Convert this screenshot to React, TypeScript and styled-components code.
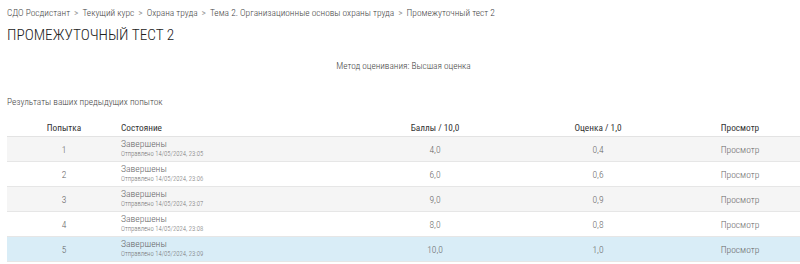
import React from "react";
import styled, { createGlobalStyle } from "styled-components";

const Global = createGlobalStyle`
  html, body { margin: 0; padding: 0; background: #fff; }
  body { font-family: "Roboto Condensed", Roboto, "Liberation Sans", sans-serif; font-stretch: condensed; font-weight: 300; color: #555; }
`;

const Page = styled.div`
  padding: 6px 0 0 7px;
  width: 807px;
  box-sizing: border-box;
  overflow: hidden;
  height: 264px;
`;

const Crumbs = styled.nav`
  display: flex;
  align-items: center;
  gap: 4px;
  font-size: 9.4px;
  line-height: 14px;
  color: #444;
  white-space: nowrap;
`;

const Sep = styled.span`
  color: #999;
  font-size: 9.4px;
  font-weight: 400;
`;

const Title = styled.h1`
  margin: 5px 0 0;
  font-size: 15.3px;
  line-height: 20px;
  font-weight: 300;
  color: #222;
`;

const Method = styled.div`
  margin-top: 14px;
  text-align: center;
  font-size: 9.3px;
  line-height: 14px;
  color: #444;
  padding-right: 7px;
`;

const Subtitle = styled.div`
  margin-top: 22px;
  font-size: 9.4px;
  line-height: 14px;
  color: #444;
`;

const Table = styled.table`
  margin-top: 10px;
  width: 800px;
  border-collapse: collapse;
  table-layout: fixed;
  font-size: 9.5px;
`;

const Th = styled.th<{ $align?: string; $w: number }>`
  width: ${(p) => p.$w}px;
  text-align: ${(p) => p.$align || "center"};
  font-weight: 400;
  font-size: 9.3px;
  color: #333;
  height: 17px;
  padding: 0;
  border-bottom: 1px solid #e3e3e3;
`;

const Tr = styled.tr<{ $bg: string }>`
  background: ${(p) => p.$bg};
  height: 24px;
  border-bottom: 1px solid #e6e6e6;
`;

const Td = styled.td<{ $align?: string }>`
  text-align: ${(p) => p.$align || "center"};
  padding: 0;
  height: 24px;
  color: #666;
  vertical-align: middle;
`;

const StateCell = styled.div`
  display: flex;
  flex-direction: column;
  padding-bottom: 2px;
`;

const State = styled.div`
  font-size: 9.7px;
  line-height: 11px;
  color: #666;
`;

const Sent = styled.div`
  font-size: 6.7px;
  line-height: 10px;
  color: #777;
`;

const rows = [
  { n: 1, t: "23:05", b: "4,0", o: "0,4" },
  { n: 2, t: "23:06", b: "6,0", o: "0,6" },
  { n: 3, t: "23:07", b: "9,0", o: "0,9" },
  { n: 4, t: "23:08", b: "8,0", o: "0,8" },
  { n: 5, t: "23:09", b: "10,0", o: "1,0" },
];

const crumbs = [
  "СДО Росдистант",
  "Текущий курс",
  "Охрана труда",
  "Тема 2. Организационные основы охраны труда",
  "Промежуточный тест 2",
];

export default function App() {
  return (
    <>
      <Global />
      <Page>
        <Crumbs>
          {crumbs.map((c, i) => (
            <React.Fragment key={c}>
              {i > 0 && <Sep>&gt;</Sep>}
              <span>{c}</span>
            </React.Fragment>
          ))}
        </Crumbs>
        <Title>ПРОМЕЖУТОЧНЫЙ ТЕСТ 2</Title>
        <Method>Метод оценивания: Высшая оценка</Method>
        <Subtitle>Результаты ваших предыдущих попыток</Subtitle>
        <Table>
          <thead>
            <tr>
              <Th $w={114}>Попытка</Th>
              <Th $w={226} $align="left">Состояние</Th>
              <Th $w={176}>Баллы / 10,0</Th>
              <Th $w={150}>Оценка / 1,0</Th>
              <Th $w={134}>Просмотр</Th>
            </tr>
          </thead>
          <tbody>
            {rows.map((r, i) => (
              <Tr key={r.n} $bg={i === 4 ? "#d9edf7" : i % 2 === 0 ? "#f5f5f5" : "#fff"}>
                <Td>{r.n}</Td>
                <Td $align="left">
                  <StateCell>
                    <State>Завершены</State>
                    <Sent>Отправлено 14/05/2024, {r.t}</Sent>
                  </StateCell>
                </Td>
                <Td>{r.b}</Td>
                <Td>{r.o}</Td>
                <Td>Просмотр</Td>
              </Tr>
            ))}
          </tbody>
        </Table>
      </Page>
    </>
  );
}
